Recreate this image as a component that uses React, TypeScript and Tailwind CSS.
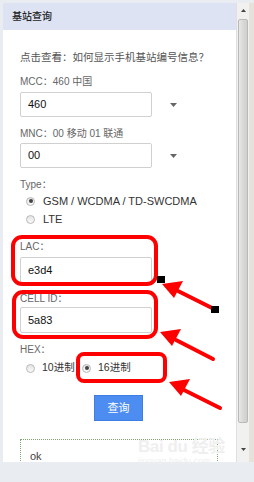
import React from 'react';

const cjk = { fontFamily: '"Liberation Sans", "Noto Sans CJK SC", sans-serif' };

function Radio({ checked }: { checked?: boolean }) {
    return (
        <span className="w-[9px] h-[9px] rounded-full border border-[#b8b8b8] bg-gradient-to-b from-[#e4e4e4] to-[#fafafa] flex items-center justify-center shrink-0">
            {checked && <span className="w-[4px] h-[4px] rounded-full bg-[#444]" />}
        </span>
    );
}

function Caret() {
    return (
        <svg width="7" height="4" viewBox="0 0 7 4" className="ml-[18px]">
            <path d="M0 0 L7 0 L3.5 4 Z" fill="#666" />
        </svg>
    );
}

function Field({ value, caret, className = '' }: { value: string; caret?: boolean; className?: string }) {
    return (
        <div className={`flex items-center ${className}`}>
            <div className="w-[132px] h-full border border-[#d0d0d0] rounded-[2px] bg-white flex items-center pl-[7px] text-[11px] text-[#111]">
                {value}
            </div>
            {caret && <Caret />}
        </div>
    );
}

export default function App() {
    return (
        <div className="w-[254px] h-[482px] bg-[#e9edf2] relative overflow-hidden flex flex-col" style={cjk}>
            <div className="flex h-[462px] shrink-0 pt-[3px] pl-[3px]">
                {/* panel */}
                <div className="w-[233px] bg-white flex flex-col overflow-hidden">
                    <div className="h-[27px] shrink-0 bg-[#dde3f3] flex items-center pl-[9px] text-[10px] text-[#222] font-medium">基站查询</div>
                    <div className="pl-[17px] text-[10px] text-[#666]">
                        <div className="mt-[20px] h-[14px] leading-[14px] text-[10.5px] text-[#555]">点击查看：如何显示手机基站编号信息？</div>
                        <div className="mt-[11px] h-[14px] leading-[14px]">MCC：460 中国</div>
                        <Field value="460" caret className="mt-[3px] h-[25px]" />
                        <div className="mt-[10px] h-[14px] leading-[14px]">MNC：00 移动 01 联通</div>
                        <Field value="00" caret className="mt-[2px] h-[25px]" />
                        <div className="mt-[10px] h-[14px] leading-[14px]">Type：</div>
                        <div className="h-[18px] flex items-center gap-[8px] pl-[6px] text-[11px] text-[#333]">
                            <Radio checked />
                            <span>GSM / WCDMA / TD-SWCDMA</span>
                        </div>
                        <div className="h-[18px] flex items-center gap-[8px] pl-[6px] text-[11px] text-[#333]">
                            <Radio />
                            <span>LTE</span>
                        </div>
                        <div className="mt-[12px] h-[14px] leading-[14px]">LAC：</div>
                        <Field value="e3d4" className="mt-[3px] h-[26px]" />
                        <div className="mt-[9px] h-[14px] leading-[14px]">CELL ID：</div>
                        <Field value="5a83" className="mt-[1px] h-[26px]" />
                        <div className="mt-[10px] h-[14px] leading-[14px]">HEX：</div>
                        <div className="mt-[2px] h-[18px] flex items-center pl-[6px] text-[10.5px] text-[#333]">
                            <Radio />
                            <span className="ml-[7px] w-[40px]">10进制</span>
                            <Radio checked />
                            <span className="ml-[7px]">16进制</span>
                        </div>
                        <button className="mt-[18px] ml-[74px] w-[49px] h-[26px] bg-[#4d8df2] border border-[#3f7de0] text-white text-[11px] flex items-center justify-center">查询</button>
                        <div className="mt-[18px] w-[198px] h-[40px] border border-dotted border-[#7caa6a] pl-[9px] pt-[10px] text-[11px] leading-[12px] text-[#444]">ok</div>
                    </div>
                </div>
                {/* scrollbar */}
                <div className="w-[13px] h-full bg-[#f1f1f1] border-l border-[#e0e0e0] flex flex-col items-center">
                    <div className="h-[14px] flex items-center justify-center">
                        <svg width="5" height="3" viewBox="0 0 5 3"><path d="M0 3 L5 3 L2.5 0 Z" fill="#444" /></svg>
                    </div>
                    <div className="w-[10px] h-[404px] mt-[2px] rounded-[2px] border border-[#b9b9b9] bg-gradient-to-r from-[#e8e8e8] via-[#d9d9d9] to-[#cfcfcf]" />
                    <div className="flex-1" />
                    <div className="h-[14px] flex items-center justify-center mb-[6px]">
                        <svg width="5" height="3" viewBox="0 0 5 3"><path d="M0 0 L5 0 L2.5 3 Z" fill="#444" /></svg>
                    </div>
                </div>
                <div className="flex-1 bg-[#e6e2da]" />
            </div>
            <div className="flex-1 bg-[#e9edf2]" />

            {/* watermark */}
            <div className="absolute left-[138px] top-[438px] text-[#efefef] leading-none pointer-events-none">
                <div className="text-[17px] font-bold tracking-tight">Bai du 经验</div>
                <div className="text-[9px] mt-[2px]">jingyan.baidu.com</div>
            </div>

            {/* annotations */}
            <svg className="absolute inset-0 pointer-events-none" width="254" height="482" viewBox="0 0 254 482">
                <g fill="none" stroke="#ff0000" strokeWidth="4">
                    <rect x="13" y="237" width="143" height="47" rx="9" />
                    <rect x="14" y="292" width="142" height="45" rx="9" />
                    <rect x="78" y="354" width="87" height="27" rx="6" />
                </g>
                <g stroke="#ff0000" strokeWidth="4" strokeLinecap="round">
                    <line x1="214" y1="309" x2="178" y2="291" />
                    <line x1="213" y1="359" x2="176" y2="340" />
                    <line x1="220" y1="408" x2="184" y2="390" />
                </g>
                <g fill="#ff0000">
                    <polygon points="162,284 183,281 174,298" />
                    <polygon points="160,332 181,329 172,346" />
                    <polygon points="169,382 190,379 181,396" />
                </g>
                <rect x="157" y="276" width="8" height="7" fill="#000" />
                <rect x="211" y="306" width="8" height="7" fill="#000" />
            </svg>
        </div>
    );
}
